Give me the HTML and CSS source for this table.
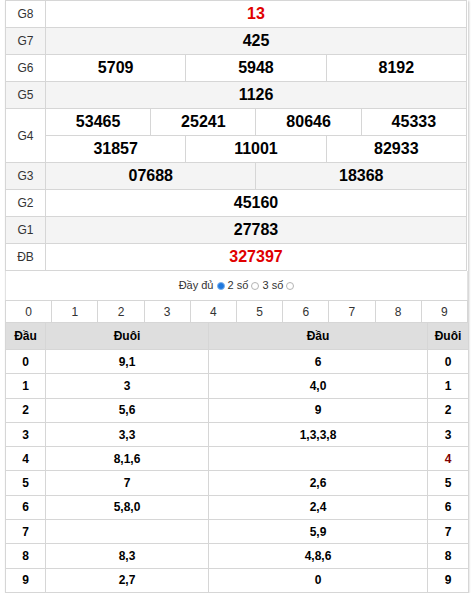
FILE: index.html
```html
<!DOCTYPE html>
<html lang="vi">
<head>
<meta charset="utf-8">
<title>Kết quả xổ số</title>
<link rel="stylesheet" href="styles.css">
</head>
<body>
<div class="kq">
  <table class="prize">
    <colgroup><col class="c-name"><col span="12" class="c-num"></colgroup>
    <tr><td class="name">G8</td><td colspan="12" class="red">13</td></tr>
    <tr class="alt"><td class="name">G7</td><td colspan="12">425</td></tr>
    <tr><td class="name">G6</td><td colspan="4">5709</td><td colspan="4">5948</td><td colspan="4">8192</td></tr>
    <tr class="alt"><td class="name">G5</td><td colspan="12">1126</td></tr>
    <tr><td class="name" rowspan="2">G4</td><td colspan="3">53465</td><td colspan="3">25241</td><td colspan="3">80646</td><td colspan="3">45333</td></tr>
    <tr><td colspan="4">31857</td><td colspan="4">11001</td><td colspan="4">82933</td></tr>
    <tr class="alt"><td class="name">G3</td><td colspan="6">07688</td><td colspan="6">18368</td></tr>
    <tr><td class="name">G2</td><td colspan="12">45160</td></tr>
    <tr class="alt"><td class="name">G1</td><td colspan="12">27783</td></tr>
    <tr><td class="name">ĐB</td><td colspan="12" class="red">327397</td></tr>
  </table>

  <div class="opts">Đầy đủ <span class="radio on"></span> 2 số <span class="radio"></span> 3 số <span class="radio"></span></div>

  <table class="digits">
    <tr><td>0</td><td>1</td><td>2</td><td>3</td><td>4</td><td>5</td><td>6</td><td>7</td><td>8</td><td>9</td></tr>
  </table>

  <table class="dd">
    <colgroup><col class="c-h"><col class="c-t"><col class="c-h2"><col class="c-t2"></colgroup>
    <tr><th>Đầu</th><th>Đuôi</th><th>Đầu</th><th>Đuôi</th></tr>
    <tr><td>0</td><td>9,1</td><td>6</td><td>0</td></tr>
    <tr><td>1</td><td>3</td><td>4,0</td><td>1</td></tr>
    <tr><td>2</td><td>5,6</td><td>9</td><td>2</td></tr>
    <tr><td>3</td><td>3,3</td><td>1,3,3,8</td><td>3</td></tr>
    <tr><td>4</td><td>8,1,6</td><td></td><td class="miss">4</td></tr>
    <tr><td>5</td><td>7</td><td>2,6</td><td>5</td></tr>
    <tr><td>6</td><td>5,8,0</td><td>2,4</td><td>6</td></tr>
    <tr><td>7</td><td></td><td>5,9</td><td>7</td></tr>
    <tr><td>8</td><td>8,3</td><td>4,8,6</td><td>8</td></tr>
    <tr><td>9</td><td>2,7</td><td>0</td><td>9</td></tr>
  </table>
</div>
</body>
</html>
```

FILE: styles.css
```css
body {
  margin: 0;
  background: #fff;
  color: #000;
  font-family: "Liberation Sans", Arial, sans-serif;
}

.kq {
  width: 463px;
  margin-left: 5px;
  box-shadow: 1px 1px 2px rgba(0, 0, 0, 0.22);
}

table {
  border-collapse: collapse;
  table-layout: fixed;
}

.prize {
  width: 462px;
}

.prize .c-name { width: 40px; }

.prize td {
  border: 1px solid #d6d6d6;
  height: 26px;
  padding: 0;
  text-align: center;
  font-size: 16px;
  font-weight: bold;
  background: #fff;
}

.prize tr.alt td {
  background: #f4f4f4;
}

.prize td.name {
  font-size: 12px;
  font-weight: normal;
  color: #333;
}

.red {
  color: #e00000;
}

.opts {
  height: 29px;
  line-height: 29px;
  text-align: center;
  font-size: 11px;
  color: #333;
  border-left: 1px solid #e2e2e2;
  border-right: 1px solid #e2e2e2;
}

.radio {
  display: inline-block;
  box-sizing: border-box;
  width: 8px;
  height: 8px;
  border-radius: 50%;
  border: 1px solid #b4b4b4;
  background: #fff;
  vertical-align: -1px;
}

.radio.on {
  border-color: #7eb2ec;
  background: #1f78de;
}

.digits {
  width: 463px;
}

.digits td {
  border: 1px solid #d6d6d6;
  height: 21px;
  padding: 0;
  text-align: center;
  font-size: 12px;
  color: #333;
}

.dd {
  width: 463px;
}

.dd .c-h { width: 40px; }
.dd .c-t { width: 163px; }
.dd .c-h2 { width: 219px; }
.dd .c-t2 { width: 41px; }

.dd th {
  border: 1px solid #d6d6d6;
  border-top: 0;
  height: 26px;
  padding: 0;
  background: #dedede;
  font-size: 12px;
  font-weight: bold;
}

.dd td {
  border: 1px solid #d6d6d6;
  height: 23.3px;
  padding: 0;
  text-align: center;
  font-size: 12px;
  font-weight: bold;
}

.dd td.miss {
  color: #800000;
}
```
